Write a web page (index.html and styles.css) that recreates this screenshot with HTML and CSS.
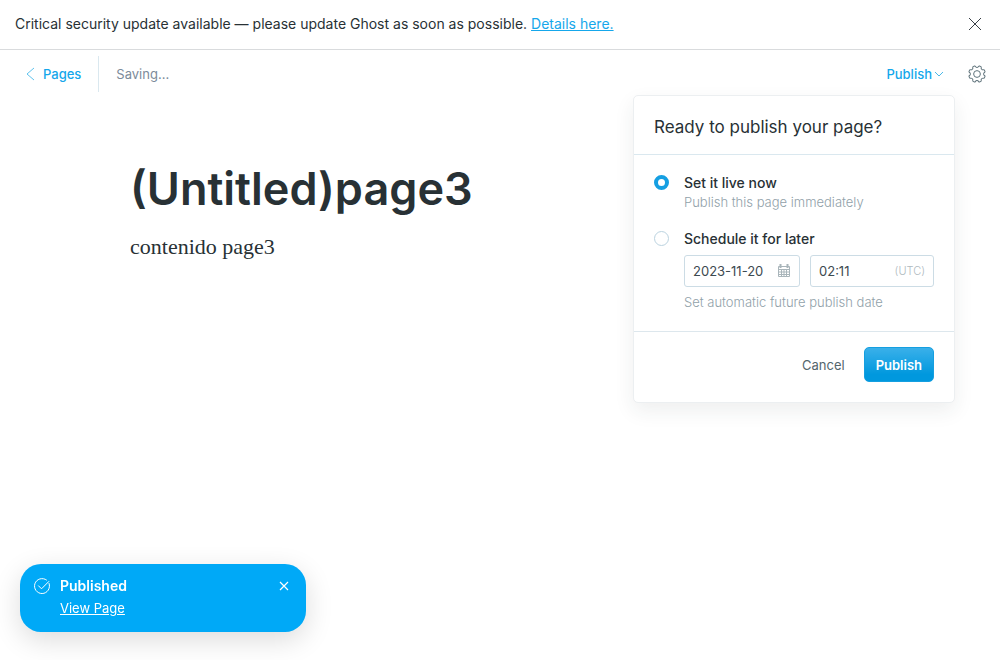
FILE: index.html
```html
<!DOCTYPE html>
<html lang="en">
<head>
<meta charset="utf-8">
<meta name="viewport" content="width=device-width, initial-scale=1">
<title>Editor</title>
<link rel="stylesheet" href="styles.css">
</head>
<body>
<div class="alert" role="alert">
  <p class="alert-text">Critical security update available — please update Ghost as soon as possible. <a class="alert-link" href="#">Details here.</a></p>
  <button class="icon-button" type="button" aria-label="Dismiss alert">
    <svg width="14" height="14" viewBox="0 0 14 14" fill="none" stroke="#394047"><path d="M1 1l12 12M13 1L1 13"/></svg>
  </button>
</div>

<header class="toolbar">
  <a class="back" href="#">
    <svg width="9" height="14" viewBox="0 0 9 14" fill="none" stroke="#5fc3ee"><path d="M8 1L1 7l7 6"/></svg>
    Pages
  </a>
  <span class="status">Saving...</span>
  <div class="publish-wrap">
    <button class="publish-trigger" type="button" aria-expanded="true">Publish
      <svg width="10" height="6" viewBox="0 0 10 6" fill="none" stroke="#4cb9e8"><path d="M1 1l4 4 4-4"/></svg>
    </button>
    <form class="menu">
      <h2 class="menu-title">Ready to publish your page?</h2>
      <div class="menu-body">
        <div class="option">
          <input class="radio" type="radio" name="when" id="now" checked>
          <div class="option-content">
            <label class="option-label" for="now">Set it live now</label>
            <p class="option-note">Publish this page immediately</p>
          </div>
        </div>
        <div class="option">
          <input class="radio" type="radio" name="when" id="later">
          <div class="option-content">
            <label class="option-label" for="later">Schedule it for later</label>
            <div class="fields">
              <div class="field field-date">
                <input class="field-input" type="text" value="2023-11-20" aria-label="Publish date">
                <svg width="14" height="14" viewBox="0 0 14 14" fill="none" stroke="#a9b5ba"><path d="M1.500 2.500h11v10h-11zM1.500 5.500h11M1.500 8h11M1.500 10.500h11M4.500 5v8M7 5v8M9.500 5v8"/><path d="M3.500 0v4M10.500 0v4" stroke-width="2"/></svg>
              </div>
              <div class="field field-time">
                <input class="field-input" type="text" value="02:11" aria-label="Publish time">
                <span class="zone">(UTC)</span>
              </div>
            </div>
            <p class="option-note">Set automatic future publish date</p>
          </div>
        </div>
      </div>
      <div class="menu-footer">
        <button class="cancel" type="button">Cancel</button>
        <button class="submit" type="button">Publish</button>
      </div>
    </form>
  </div>
  <button class="icon-button" type="button" aria-label="Settings">
    <svg width="18" height="18" viewBox="0 0 24 24" fill="none" stroke="#5d7179" stroke-width="1.300">
      <defs><path id="tooth" d="M8.630 3.870Q10 3.300 10.200 1.600Q10.300 .9 11 .9H13Q13.700 .9 13.800 1.600Q14 3.300 15.370 3.870"/></defs>
      <g transform="rotate(22.500 12 12)">
        <use href="#tooth"/><use href="#tooth" transform="rotate(45 12 12)"/><use href="#tooth" transform="rotate(90 12 12)"/><use href="#tooth" transform="rotate(135 12 12)"/><use href="#tooth" transform="rotate(180 12 12)"/><use href="#tooth" transform="rotate(225 12 12)"/><use href="#tooth" transform="rotate(270 12 12)"/><use href="#tooth" transform="rotate(315 12 12)"/>
      </g>
      <circle cx="12" cy="12" r="4.500"/>
    </svg>
  </button>
</header>

<main class="editor">
  <h1 class="title">(Untitled)page3</h1>
  <p class="content">contenido page3</p>
</main>

<aside class="toast" role="status">
  <svg class="toast-icon" width="16" height="16" viewBox="0 0 16 16" fill="none" stroke="#fff" stroke-linecap="round" stroke-linejoin="round"><path d="M15.100 5.500A7.500 7.500 0 1 1 12.500 2M4.500 7.800l3 3 7.300-7.300"/></svg>
  <div class="toast-content">
    <strong class="toast-title">Published</strong>
    <a class="toast-link" href="#">View Page</a>
  </div>
  <button class="toast-close" type="button" aria-label="Close">
    <svg width="10" height="10" viewBox="0 0 10 10" fill="none" stroke="#fff" stroke-width="1.200"><path d="M1 1l8 8M9 1L1 9"/></svg>
  </button>
</aside>
</body>
</html>
```
FILE: styles.css
```css
* { box-sizing: border-box; }
body {
  margin: 0;
  min-height: 100vh;
  background: #fff;
  color: #283135;
  font-family: Inter, "Open Sans", sans-serif;
  font-size: 13px;
  line-height: 20px;
}
p, h1, h2 { margin: 0; }
button, input { font: inherit; color: inherit; }
button { padding: 0; border: 0; background: none; cursor: pointer; }
svg { display: block; flex: none; }

.alert {
  display: flex;
  align-items: center;
  justify-content: space-between;
  padding: 14px 18px 15px 15px;
  border-bottom: 1px solid #d9dbdd;
}
.alert-text { font-size: 14px; }
.alert-link { color: #15a7eb; }

.toolbar {
  display: flex;
  align-items: center;
  padding: 6px 14px 0 26px;
}
.back {
  display: flex;
  align-items: center;
  gap: 8px;
  height: 36px;
  padding-right: 17px;
  border-right: 1px solid #dae8ef;
  color: #15a7eb;
  font-weight: 500;
  text-decoration: none;
}
.status { margin-left: 17px; color: #7c8b9a; }
.publish-wrap { position: relative; margin-left: auto; margin-right: 24px; }
.publish-trigger {
  display: flex;
  align-items: center;
  gap: 2px;
  color: #15a7eb;
  font-weight: 500;
}

.menu {
  position: absolute;
  top: 31px;
  right: -11px;
  width: 322px;
  border: 1px solid #eceff1;
  border-radius: 5px;
  background: #fff;
  box-shadow: 0 8px 20px rgba(39, 49, 53, .08);
}
.menu-title {
  padding: 19px 20px 15px;
  border-bottom: 1px solid #dae8ef;
  font-size: 17px;
  font-weight: 400;
  line-height: 24px;
}
.menu-body {
  display: grid;
  gap: 18px;
  padding: 18px 20px 20px;
  border-bottom: 1px solid #dde7ed;
}
.option { display: flex; gap: 15px; }
.radio {
  appearance: none;
  flex: none;
  width: 15px;
  height: 15px;
  margin: 2px 0;
  border: 1px solid #bbd3e0;
  border-radius: 50%;
  background: #fff;
}
.radio:checked { border: 4px solid #159fe2; }
.option-content { flex: 1; min-width: 0; }
.option-label { display: block; font-size: 14px; font-weight: 500; }
.option-note { color: #91a1a9; font-weight: 300; line-height: 18px; }
.fields { display: flex; gap: 10px; margin: 6px 0; }
.field {
  display: flex;
  align-items: center;
  height: 32px;
  padding: 0 8px;
  border: 1px solid #ccdce5;
  border-radius: 3px;
  color: #3d4a50;
}
.field-date { width: 116px; }
.field-time { flex: 1; }
.field-input {
  flex: 1;
  width: 100%;
  min-width: 0;
  padding: 0;
  border: 0;
  outline: 0;
  background: none;
}
.zone { color: #afbac0; font-size: 11px; font-weight: 300; }
.menu-footer {
  display: flex;
  align-items: center;
  justify-content: flex-end;
  gap: 19px;
  padding: 15px 20px 20px;
}
.cancel { color: #54666d; }
.submit {
  height: 35px;
  padding: 0 11px;
  border: 1px solid #159fe0;
  border-radius: 5px;
  background: linear-gradient(#3ab0ea, #0098de 80%);
  color: #fff;
  font-weight: 600;
}

.editor { padding: 66px 130px; }
.title { font-size: 45px; font-weight: 600; line-height: 62px; }
.content {
  margin-top: 10px;
  font-family: Georgia, "Liberation Serif", serif;
  font-size: 22px;
  line-height: 34px;
}

.toast {
  position: fixed;
  left: 20px;
  bottom: 28px;
  display: flex;
  align-items: flex-start;
  gap: 10px;
  width: 286px;
  padding: 12px 17px 14px 14px;
  border-radius: 21px;
  background: #00a9f7;
  color: #fff;
  box-shadow: 0 8px 28px rgba(0, 0, 0, .14);
}
.toast-icon { margin-top: 2px; }
.toast-content { display: grid; gap: 2px; flex: 1; justify-items: start; }
.toast-title { font-size: 14px; font-weight: 600; }
.toast-link { color: #fff; }
.toast-close { margin-top: 5px; }
```
